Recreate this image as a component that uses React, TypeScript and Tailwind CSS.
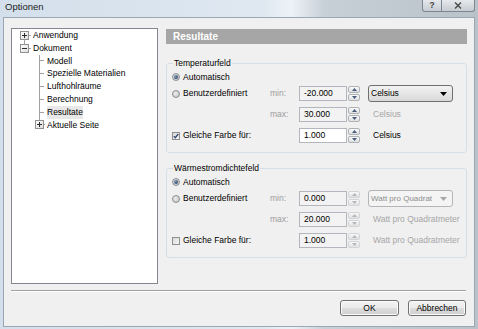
import * as React from "react";

const line = "bg-[#a0a0a0]";

function ExpandBox({ open }: { open?: boolean }) {
  return (
    <svg width="9" height="9" viewBox="0 0 9 9" className="block shrink-0">
      <defs>
        <linearGradient id="bx" x1="0" y1="0" x2="1" y2="1">
          <stop offset="0" stopColor="#ffffff" />
          <stop offset="1" stopColor="#dcdcdc" />
        </linearGradient>
      </defs>
      <rect x="0.5" y="0.5" width="8" height="8" fill="url(#bx)" stroke="#919191" />
      <path d="M2 4.5h5" stroke="#2b2b2b" />
      {!open && <path d="M4.5 2v5" stroke="#2b2b2b" />}
    </svg>
  );
}

function TreeRow({
  children,
  kind,
  selected
}: {
  children: React.ReactNode;
  kind: "root-first" | "root-last" | "child" | "child-parent";
  selected?: boolean;
}) {
  const label = (
    <span className={selected ? "ml-[2px] bg-[#e8e8e8]" : "ml-[2px]"}>
      {children}
    </span>
  );
  if (kind === "child") {
    return (
      <div className="flex h-[12.8px] items-center">
        <span className="w-[27px] shrink-0" />
        <span className="flex h-full w-[6px] shrink-0 items-center border-l border-[#a0a0a0]">
          <span className={`h-px w-[4px] ${line}`} />
        </span>
        {label}
      </div>
    );
  }
  const lead = kind === "child-parent" ? "w-[23px]" : "w-[8px]";
  return (
    <div className="flex h-[12.8px] items-center">
      <span className={`${lead} shrink-0`} />
      <span className="flex h-full w-[9px] shrink-0 flex-col items-center">
        <span className={`w-px flex-1 ${kind === "root-first" ? "" : line}`} />
        <ExpandBox open={kind === "root-last"} />
        <span className={`w-px flex-1 ${kind === "root-first" ? line : ""}`} />
      </span>
      <span className={`h-px ${kind === "child-parent" ? "w-px" : "w-[2px]"} ${line}`} />
      {label}
    </div>
  );
}

function Radio({ checked }: { checked?: boolean }) {
  return (
    <span className="flex h-[8px] w-[8px] shrink-0 items-center justify-center rounded-full border border-[#8c8e91] bg-[radial-gradient(circle_at_40%_40%,#f0f0f0,#b9bbbe)]">
      {checked && (
        <span className="h-[4px] w-[4px] rounded-full bg-[radial-gradient(circle_at_35%_35%,#7b94b8,#1d3553)]" />
      )}
    </span>
  );
}

function Check({ checked }: { checked?: boolean }) {
  return (
    <svg width="8" height="8" viewBox="0 0 8 8" className="block shrink-0">
      <defs>
        <linearGradient id="cb" x1="0" y1="0" x2="1" y2="1">
          <stop offset="0" stopColor="#d6d6d6" />
          <stop offset="1" stopColor="#f8f8f8" />
        </linearGradient>
      </defs>
      <rect x="0.5" y="0.5" width="7" height="7" fill="url(#cb)" stroke="#8e8f8f" />
      {checked && (
        <path d="M1.8 4.1L3.3 5.7L6.3 2" fill="none" stroke="#33466e" strokeWidth="1.3" />
      )}
    </svg>
  );
}

function SpinHalf({ up, disabled }: { up?: boolean; disabled?: boolean }) {
  return (
    <span
      className={`flex flex-1 items-center justify-center rounded-[2px] border bg-gradient-to-b from-[#f9f9f9] to-[#e0e0e0] ${
        disabled ? "border-[#d2d4d6]" : "border-[#aeb2b6]"
      }`}
    >
      <svg width="5" height="3" viewBox="0 0 5 3" className="block">
        <path
          d={up ? "M0 3L2.5 0L5 3Z" : "M0 0L2.5 3L5 0Z"}
          fill={disabled ? "#b4b8bd" : "#485d7c"}
        />
      </svg>
    </span>
  );
}

function Spinner({ disabled }: { disabled?: boolean }) {
  return (
    <div className="ml-[1px] flex h-[15px] w-[12px] shrink-0 flex-col gap-px">
      <SpinHalf up disabled={disabled} />
      <SpinHalf disabled={disabled} />
    </div>
  );
}

function Field({ value, white }: { value: string; white?: boolean }) {
  return (
    <div
      className={`h-[15px] w-[48px] shrink-0 border border-[#b3b7bd] pl-[4px] leading-[13px] ${
        white ? "bg-white" : "bg-[#f3f3f3]"
      }`}
    >
      {value}
    </div>
  );
}

function Dropdown({ label, disabled }: { label: string; disabled?: boolean }) {
  return (
    <div
      className={`flex h-[17px] w-[85px] items-center justify-between rounded-[3px] border pl-[2px] pr-[5px] ${
        disabled
          ? "border-[#b3b6b9] bg-[#f4f4f4] text-[#8d8d8d]"
          : "border-[#707070] bg-gradient-to-b from-[#f3f3f3] to-[#d9d9d9]"
      }`}
    >
      <span className={disabled ? "whitespace-nowrap text-[8px]" : "whitespace-nowrap"}>
        {label}
      </span>
      <svg width="7" height="4" viewBox="0 0 7 4" className="block shrink-0">
        <path d="M0 0H7L3.5 4Z" fill={disabled ? "#a7a7a7" : "#000"} />
      </svg>
    </div>
  );
}

function FieldRow({
  left,
  tag,
  value,
  white,
  disabled,
  right
}: {
  left?: React.ReactNode;
  tag?: string;
  value: string;
  white?: boolean;
  disabled?: boolean;
  right: React.ReactNode;
}) {
  return (
    <div className="flex h-[15px] items-center">
      <div className="flex w-[98px] shrink-0 items-center gap-[3px]">{left}</div>
      <div className="w-[29px] shrink-0 text-[#9d9d9d]">{tag}</div>
      <Field value={value} white={white} />
      <Spinner disabled={disabled} />
      <div className="ml-[8px] w-[90px] shrink-0">{right}</div>
    </div>
  );
}

function Group({
  title,
  children
}: {
  title: string;
  children: React.ReactNode;
}) {
  return (
    <div className="relative h-[90px] rounded-[3px] border border-[#d5dfe5] pl-[5px] pt-[7px]">
      <span className="absolute left-[6px] top-[-6px] bg-[#f0f0f0] px-px leading-[10px]">
        {title}
      </span>
      {children}
    </div>
  );
}

function Unit({ children, dim }: { children: React.ReactNode; dim?: boolean }) {
  return (
    <span className={`whitespace-nowrap pl-[5px] ${dim ? "text-[#a6a6a6]" : ""}`}>
      {children}
    </span>
  );
}

function WinButton({ children, w }: { children: React.ReactNode; w: string }) {
  return (
    <div
      className={`${w} flex h-[16px] items-center justify-center rounded-[3px] border border-[#707070] bg-[linear-gradient(#f2f2f2_0%,#ebebeb_50%,#dddddd_51%,#cfcfcf_100%)] shadow-[inset_0_0_0_1px_#fbfbfb]`}
    >
      {children}
    </div>
  );
}

export default function App() {
  return (
    <div className="h-[329px] w-[478px] overflow-hidden bg-[linear-gradient(90deg,#d3dfeb_0%,#dfe8f1_55%,#edf2f7_61%,#c7cfd7_68%,#b9c1c9_100%)] font-['Liberation_Sans',Arial,sans-serif] text-[8.5px] text-black">
      <div className="flex h-[17px] items-start justify-between">
        <span className="pl-[5px] pt-[1px] text-[9.5px] leading-[12px] text-[#222]">
          Optionen
        </span>
        <div className="mr-[3px] flex h-[12px]">
          <div className="flex w-[20px] items-center justify-center rounded-bl-[3px] border border-t-0 border-[#7d8792] bg-gradient-to-b from-[#e6e9ec] to-[#c6ccd2] text-[9px] font-bold leading-none text-[#454545]">
            ?
          </div>
          <div className="flex w-[33px] items-center justify-center rounded-br-[3px] border border-l-0 border-t-0 border-[#7d8792] bg-gradient-to-b from-[#e6e9ec] to-[#c6ccd2]">
            <svg width="8" height="7" viewBox="0 0 8 7" className="block">
              <path d="M1 0.5L7 6.5M7 0.5L1 6.5" stroke="#4a4a4a" strokeWidth="1.4" />
            </svg>
          </div>
        </div>
      </div>

      <div className="ml-[3px] flex h-[310px] w-[472px] flex-col border border-[#9ba7b3] bg-[#f0f0f0]">
        <div className="flex items-start gap-[8px] pl-[7px] pt-[10px]">
          <div className="h-[256px] w-[147px] shrink-0 border border-[#828790] bg-white">
            <TreeRow kind="root-first">Anwendung</TreeRow>
            <TreeRow kind="root-last">Dokument</TreeRow>
            <TreeRow kind="child">Modell</TreeRow>
            <TreeRow kind="child">Spezielle Materialien</TreeRow>
            <TreeRow kind="child">Lufthohlräume</TreeRow>
            <TreeRow kind="child">Berechnung</TreeRow>
            <TreeRow kind="child" selected>
              Resultate
            </TreeRow>
            <TreeRow kind="child-parent">Aktuelle Seite</TreeRow>
          </div>

          <div className="w-[301px] shrink-0">
            <div className="mt-[1px] flex h-[15px] items-center bg-[#a6a6a6] pl-[7px] text-[10px] font-bold text-white">
              Resultate
            </div>

            <div className="mt-[19px]">
              <Group title="Temperaturfeld">
                <div className="flex h-[12px] items-center gap-[3px]">
                  <Radio checked />
                  <span>Automatisch</span>
                </div>
                <div className="mt-[3px] flex flex-col gap-[6px]">
                  <FieldRow
                    left={
                      <>
                        <Radio />
                        <span>Benutzerdefiniert</span>
                      </>
                    }
                    tag="min:"
                    value="-20.000"
                    right={<Dropdown label="Celsius" />}
                  />
                  <FieldRow tag="max:" value="30.000" right={<Unit dim>Celsius</Unit>} />
                  <FieldRow
                    left={
                      <>
                        <Check checked />
                        <span>Gleiche Farbe für:</span>
                      </>
                    }
                    value="1.000"
                    white
                    right={<Unit>Celsius</Unit>}
                  />
                </div>
              </Group>
            </div>

            <div className="mt-[15px]">
              <Group title="Wärmestromdichtefeld">
                <div className="flex h-[12px] items-center gap-[3px]">
                  <Radio checked />
                  <span>Automatisch</span>
                </div>
                <div className="mt-[3px] flex flex-col gap-[6px]">
                  <FieldRow
                    left={
                      <>
                        <Radio />
                        <span>Benutzerdefiniert</span>
                      </>
                    }
                    tag="min:"
                    value="0.000"
                    disabled
                    right={<Dropdown label="Watt pro Quadrat" disabled />}
                  />
                  <FieldRow
                    tag="max:"
                    value="20.000"
                    disabled
                    right={<Unit dim>Watt pro Quadratmeter</Unit>}
                  />
                  <FieldRow
                    left={
                      <>
                        <Check />
                        <span>Gleiche Farbe für:</span>
                      </>
                    }
                    value="1.000"
                    disabled
                    right={<Unit dim>Watt pro Quadratmeter</Unit>}
                  />
                </div>
              </Group>
            </div>
          </div>
        </div>

        <div className="ml-[7px] mt-[6px] h-[2px] w-[455px] border-b border-t border-b-white border-t-[#a0a0a0]" />

        <div className="mt-[8px] flex justify-end gap-[9px] pr-[8px]">
          <WinButton w="w-[59px]">OK</WinButton>
          <WinButton w="w-[58px]">Abbrechen</WinButton>
        </div>
      </div>
    </div>
  );
}
